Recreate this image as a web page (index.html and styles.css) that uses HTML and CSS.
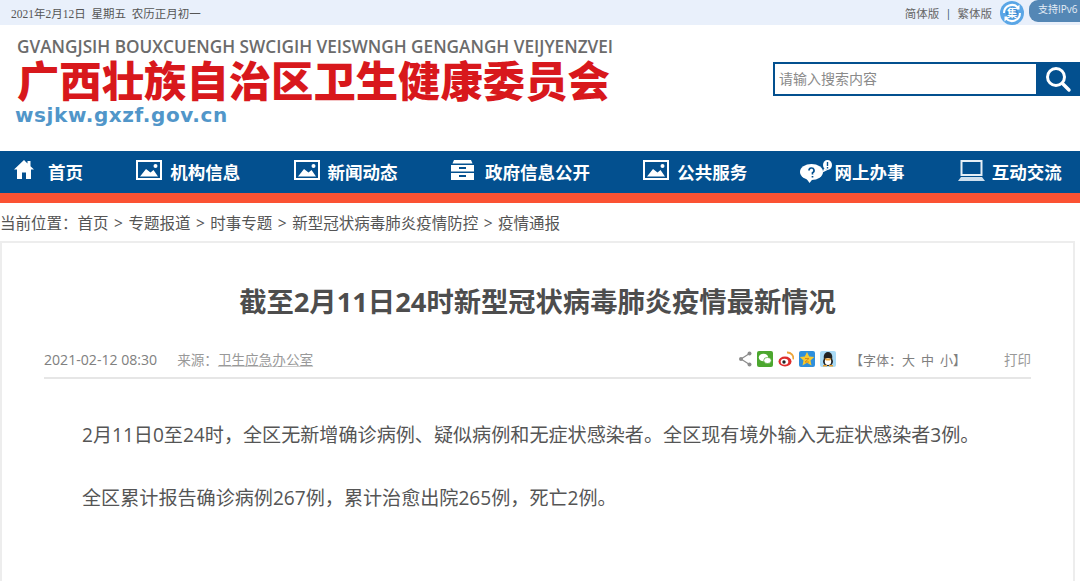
FILE: index.html
```html
<!DOCTYPE html>
<html lang="zh-CN">
<head>
  <meta charset="UTF-8" />
  <title>截至2月11日24时新型冠状病毒肺炎疫情最新情况</title>
  <link rel="stylesheet" href="styles.css">
</head>
<body>

  <!-- Top bar -->
  <div class="topbar">
    <div class="date">2021年2月12日&nbsp; 星期五&nbsp; 农历正月初一</div>
    <div class="top-right">
      <a>简体版</a><span class="sep">|</span><a>繁体版</a>
      <svg class="care" viewBox="0 0 24 24" width="24" height="24">
        <circle cx="12" cy="12" r="12" fill="#5aa6e6"/>
        <path d="M4 12a8 8 0 0 1 14-5.300M20 12a8 8 0 0 1-14 5.300" fill="none" stroke="#fff" stroke-width="2"/>
        <path d="M19.500 3.500v5h-5zM4.500 20.500v-5h5z" fill="#fff"/>
        <circle cx="12" cy="12" r="6" fill="#3f8fd6"/>
        <text x="12" y="15.500" class="care-glyph">集</text>
      </svg>
      <div class="ipv6">支持IPv6</div>
    </div>
  </div>

  <!-- Logo and search -->
  <div class="header">
    <div class="logo">
      <div class="logo-zhuang">GVANGJSIH BOUXCUENGH SWCIGIH VEISWNGH GENGANGH VEIJYENZVEI</div>
      <div class="logo-name">广西壮族自治区卫生健康委员会</div>
      <div class="logo-url">wsjkw.gxzf.gov.cn</div>
    </div>
    <div class="search">
      <div class="search-input">请输入搜索内容</div>
      <div class="search-btn">
        <svg viewBox="0 0 28 28" width="28" height="28">
          <circle cx="12" cy="12" r="8.500" fill="none" stroke="#fff" stroke-width="3"/>
          <path d="M18.500 18.500L25 25" stroke="#fff" stroke-width="3.400" stroke-linecap="round"/>
        </svg>
      </div>
    </div>
  </div>

  <!-- Nav -->
  <div class="nav">
    <a class="nav-item">
      <svg viewBox="0 0 20 20" width="20" height="20"><path d="M10 0L0 9.500h3V19h5v-6.500h4V19h5V9.500h3l-3.500-3.300V1h-3v2.400z" fill="#fff"/></svg>
      首页
    </a>
    <a class="nav-item">
      <svg viewBox="0 0 26 20" width="26" height="20"><rect x="1" y="1" width="24" height="18" fill="none" stroke="#fff" stroke-width="2"/><path d="M4 16.500L10 9l4.500 3.500 3-2.500 4.500 6.500z" fill="#fff"/><circle cx="19.500" cy="6" r="2" fill="#fff"/></svg>
      机构信息
    </a>
    <a class="nav-item">
      <svg viewBox="0 0 26 20" width="26" height="20"><rect x="1" y="1" width="24" height="18" fill="none" stroke="#fff" stroke-width="2"/><path d="M4 16.500L10 9l4.500 3.500 3-2.500 4.500 6.500z" fill="#fff"/><circle cx="19.500" cy="6" r="2" fill="#fff"/></svg>
      新闻动态
    </a>
    <a class="nav-item">
      <svg viewBox="0 0 23 20" width="23" height="20"><path d="M3 0h17l1.500 3.500h-20z" fill="#fff"/><rect x="0" y="5" width="23" height="6.500" fill="#fff"/><rect x="0" y="13" width="23" height="7" fill="#fff"/><rect x="8" y="7" width="7" height="2" fill="#03508f"/><rect x="8" y="15" width="7" height="2" fill="#03508f"/></svg>
      政府信息公开
    </a>
    <a class="nav-item">
      <svg viewBox="0 0 26 20" width="26" height="20"><rect x="1" y="1" width="24" height="18" fill="none" stroke="#fff" stroke-width="2"/><path d="M4 16.500L10 9l4.500 3.500 3-2.500 4.500 6.500z" fill="#fff"/><circle cx="19.500" cy="6" r="2" fill="#fff"/></svg>
      公共服务
    </a>
    <a class="nav-item">
      <svg viewBox="0 0 32 23" width="32" height="23"><ellipse cx="11.500" cy="12" rx="11.500" ry="8" fill="#fff"/><path d="M6 18l3.500 5 4-5z" fill="#fff"/><ellipse cx="27.500" cy="5" rx="4.500" ry="5" fill="#fff"/><path d="M24 8.500l-1.500 4 5-2.500z" fill="#fff"/><path d="M9 10.500a2.500 2.500 0 1 1 3.500 2.300V14.500M12.500 16v1.500" fill="none" stroke="#03508f" stroke-width="1.700"/><path d="M27.500 2v4M27.500 7v1.500" stroke="#03508f" stroke-width="1.400"/></svg>
      网上办事
    </a>
    <a class="nav-item">
      <svg viewBox="0 0 27 22" width="27" height="22"><rect x="3.500" y="1" width="20" height="14" fill="none" stroke="#e6eff6" stroke-width="2"/><path d="M3 17h21l3 4H0z" fill="#cfe0ee"/></svg>
      互动交流
    </a>
  </div>
  <div class="nav-stripe"></div>

  <!-- Breadcrumb -->
  <div class="crumbs">当前位置&#xFF1A;<a>首页</a><i>&gt;</i><a>专题报道</a><i>&gt;</i><a>时事专题</a><i>&gt;</i><a>新型冠状病毒肺炎疫情防控</a><i>&gt;</i><a>疫情通报</a></div>

  <!-- Article -->
  <div class="article">
    <h1>截至2月11日24时新型冠状病毒肺炎疫情最新情况</h1>
    <div class="meta">
      <span class="meta-date">2021-02-12 08:30</span>
      <span class="meta-source">来源&#xFF1A;<u>卫生应急办公室</u></span>
      <div class="meta-right">
        <div class="share">
          <svg viewBox="0 0 14 16" width="14" height="16"><path d="M11.500 2.500L3 8l8.500 5.500" fill="none" stroke="#8c8c8c" stroke-width="1.200"/><circle cx="11.500" cy="2.500" r="2" fill="#8c8c8c"/><circle cx="3" cy="8" r="2" fill="#8c8c8c"/><circle cx="11.500" cy="13.500" r="2" fill="#8c8c8c"/></svg>
          <svg viewBox="0 0 16 16" width="16" height="16"><rect width="16" height="16" rx="2" fill="#4ca72f"/><ellipse cx="6.500" cy="6.500" rx="4.700" ry="3.800" fill="#fff"/><ellipse cx="10.500" cy="9.500" rx="3.800" ry="3.100" fill="#fff" stroke="#4ca72f" stroke-width=".7"/></svg>
          <svg viewBox="0 0 16 16" width="16" height="16"><ellipse cx="7" cy="10.500" rx="6.500" ry="5" fill="#dd2c2c"/><ellipse cx="6.500" cy="10.800" rx="3.800" ry="3" fill="#fff"/><circle cx="6" cy="11" r="1.700" fill="#222"/><path d="M9 1.500a6 6 0 0 1 6.300 7" fill="none" stroke="#eda53a" stroke-width="1.800"/></svg>
          <svg viewBox="0 0 16 16" width="16" height="16"><rect width="16" height="16" rx="2" fill="#2f8fdc"/><path d="M8 1l2.200 4.500 5 .6-3.700 3.400 1 4.900L8 11.800l-4.500 2.600 1-4.900L.800 6.100l5-.6z" fill="#f8c92e"/><path d="M6 7.500h4l-4 3.500h4" fill="none" stroke="#d68a1c" stroke-width="1"/></svg>
          <svg viewBox="0 0 16 16" width="16" height="16"><rect width="16" height="16" rx="2" fill="#a9daf5"/><ellipse cx="8" cy="6" rx="4.300" ry="5" fill="#222"/><ellipse cx="8" cy="10.500" rx="5" ry="4.500" fill="#222"/><ellipse cx="8" cy="10.500" rx="3.200" ry="3.500" fill="#fff"/><path d="M4.500 7.500h7l-1.500 2H6z" fill="#eda53a"/><path d="M3 14h4v1.500H3zM9 14h4v1.500H9z" fill="#e8a030"/></svg>
        </div>
        <span class="font-size">【字体&#xFF1A;大 中 小】</span>
        <span class="print">打印</span>
      </div>
    </div>
    <p>2月11日0至24时&#xFF0C;全区无新增确诊病例、疑似病例和无症状感染者。全区现有境外输入无症状感染者3例。</p>
    <p>全区累计报告确诊病例267例&#xFF0C;累计治愈出院265例&#xFF0C;死亡2例。</p>
  </div>

</body>
</html>
```

FILE: styles.css
```css
* {
  margin: 0;
  padding: 0;
  box-sizing: border-box;
}

body {
  width: 1080px;
  height: 581px;
  overflow: hidden;
  background: #fff;
  font-family: "Open Sans", "Noto Sans CJK SC", sans-serif;
  color: #555;
}

.topbar {
  height: 25px;
  background: #e9f0fb;
  display: flex;
  justify-content: space-between;
  align-items: center;
  padding-left: 11px;
}

.date {
  font-family: "Liberation Serif", "Noto Sans CJK SC", serif;
  font-size: 11.500px;
  color: #555;
}

.top-right {
  display: flex;
  align-items: center;
  font-size: 11.500px;
  color: #666;
}

.sep {
  margin: 0 6px;
  color: #3d5c70;
}

.care {
  margin-left: 8px;
}

.care-glyph {
  font-size: 10px;
  font-weight: 700;
  fill: #fff;
  text-anchor: middle;
}

.ipv6 {
  width: 51px;
  height: 22px;
  margin-left: 5px;
  margin-top: -3px;
  padding-left: 9px;
  line-height: 18px;
  font-size: 10px;
  color: #e4edf5;
  background: #5487b5;
  border-radius: 9px 0 0 9px;
}

.header {
  height: 126px;
  display: flex;
  justify-content: space-between;
  align-items: flex-start;
}

.logo {
  padding: 12px 0 0 16px;
  width: 640px;
}

.logo-zhuang {
  margin-left: 1px;
  font-size: 17.200px;
  font-weight: 600;
  line-height: 20px;
  color: #6b6b6b;
  white-space: nowrap;
}

.logo-name {
  margin: 1px 0 0 1px;
  font-size: 42.350px;
  font-weight: 900;
  line-height: 46px;
  color: #d8181c;
  white-space: nowrap;
}

.logo-url {
  margin-left: -1px;
  font-family: "DejaVu Sans", sans-serif;
  font-size: 20px;
  font-weight: 700;
  line-height: 22px;
  color: #5196c9;
  letter-spacing: 0.6px;
}

.search {
  margin-top: 37px;
  width: 307px;
  height: 34px;
  display: flex;
  border: 2px solid #03508f;
  border-right: none;
}

.search-input {
  flex: 1;
  padding-left: 4px;
  font-size: 14px;
  line-height: 30px;
  color: #8a8a8a;
}

.search-btn {
  width: 44px;
  margin: -2px 0;
  background: #03508f;
  display: flex;
  align-items: center;
  justify-content: center;
}

.nav {
  height: 42px;
  background: #03508f;
  display: flex;
  align-items: center;
  gap: 53.300px;
  padding: 0 0 2px 14px;
}

.nav-item {
  display: flex;
  align-items: center;
  font-size: 17.500px;
  font-weight: 700;
  color: #fff;
  position: relative;
  padding-left: 34px;
  white-space: nowrap;
}

.nav-item svg {
  position: absolute;
  left: 0;
  top: 1px;
}

.nav-stripe {
  height: 10px;
  background: #fb5233;
}

.crumbs {
  height: 38px;
  line-height: 40px;
  font-size: 15.500px;
  color: #555;
  white-space: nowrap;
}

.crumbs i {
  font-style: normal;
  margin: 0 5.500px;
}

.article {
  width: 1075px;
  height: 345px;
  border: 2px solid #ededed;
  border-bottom: none;
  padding: 0 42px;
}

h1 {
  padding-top: 41px;
  font-size: 27.300px;
  line-height: 36px;
  font-weight: 700;
  color: #4d4d4d;
  text-align: center;
  height: 98px;
  white-space: nowrap;
}

.meta {
  height: 38px;
  display: flex;
  align-items: center;
  font-size: 14.100px;
  color: #808080;
  border-bottom: 2px solid #e6e6e6;
}

.meta-source {
  margin-left: 20px;
  font-size: 13.600px;
  color: #999;
}

.meta-source u {
  text-decoration-color: #ccc;
}

.meta-right {
  margin-left: auto;
  display: flex;
  align-items: center;
}

.share {
  display: flex;
  align-items: center;
  gap: 5px;
}

.font-size {
  margin-left: 14px;
  font-size: 13px;
  word-spacing: 2.600px;
}

.print {
  margin-left: 38px;
  font-size: 13.500px;
  color: #999;
}

p {
  font-size: 19.100px;
  line-height: 28px;
  text-indent: 38px;
  color: #555;
  white-space: nowrap;
}

.meta + p {
  margin-top: 42px;
}

p + p {
  margin-top: 35px;
}
```
